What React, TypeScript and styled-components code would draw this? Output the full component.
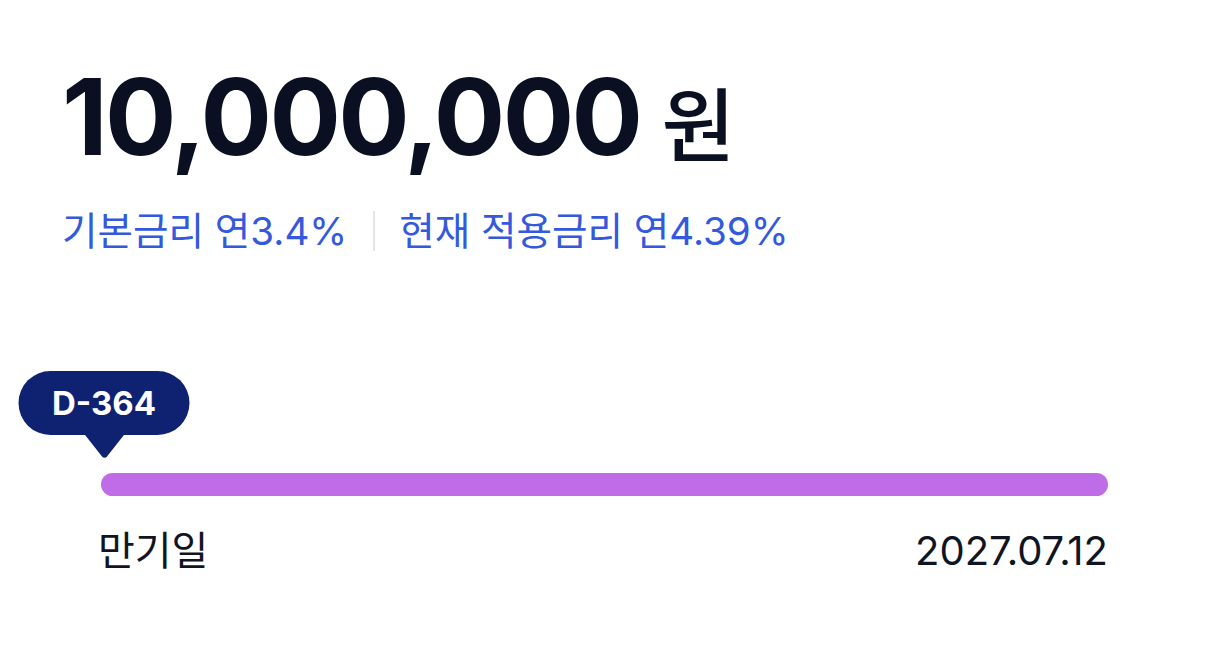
import styled, { createGlobalStyle } from 'styled-components';

const GlobalStyle = createGlobalStyle`
  html, body {
    margin: 0;
    padding: 0;
    background: #ffffff;
  }
  body {
    font-family: Inter, "Noto Sans CJK KR", sans-serif;
    -webkit-font-smoothing: antialiased;
  }
`;

const Page = styled.div`
  width: 1206px;
  height: 650px;
  box-sizing: border-box;
  padding: 59px 0 0 62px;
  display: flex;
  flex-direction: column;
`;

const AmountRow = styled.div`
  display: flex;
  align-items: baseline;
  gap: 21px;
  color: #0a1022;
`;

const Amount = styled.span`
  font-family: Inter, sans-serif;
  font-size: 106px;
  font-weight: 700;
  letter-spacing: -2.6px;
  line-height: 116px;
`;

const Unit = styled.span`
  font-family: "Noto Sans CJK KR", sans-serif;
  font-size: 80px;
  font-weight: 500;
`;

const RateRow = styled.div`
  display: flex;
  align-items: center;
  margin-top: 30px;
  color: #3459dd;
  font-size: 38.6px;
  line-height: 46px;
  font-family: Inter, "Noto Sans CJK KR", sans-serif;
  font-weight: 400;
`;

const Divider = styled.span`
  width: 2px;
  height: 40px;
  background: #e3e5ea;
  margin: 0 24px 0 26px;
`;

const Track = styled.div`
  position: relative;
  margin: 219px 0 0 39px;
  width: 1007px;
`;

const Bubble = styled.div`
  position: absolute;
  left: 3px;
  bottom: 100%;
  margin-bottom: 38px;
  transform: translateX(-50%);
  width: 171px;
  height: 64px;
  border-radius: 32px;
  background: #0f2271;
  color: #ffffff;
  font-family: Inter, sans-serif;
  font-size: 33px;
  font-weight: 700;
  display: flex;
  align-items: center;
  justify-content: center;
`;

const Pointer = styled.svg`
  position: absolute;
  left: 50%;
  top: 62px;
  transform: translateX(-50%);
`;

const Bar = styled.div`
  height: 23px;
  border-radius: 12px;
  background: #c06be7;
`;

const Labels = styled.div`
  display: flex;
  justify-content: space-between;
  margin-top: 32px;
  margin-left: -3px;
  color: #111522;
  font-family: Inter, "Noto Sans CJK KR", sans-serif;
  font-size: 40px;
  line-height: 46px;
`;

export default function App() {
  return (
    <>
      <GlobalStyle />
      <Page>
        <AmountRow>
          <Amount>10,000,000</Amount>
          <Unit>원</Unit>
        </AmountRow>
        <RateRow>
          <span>기본금리 연3.4%</span>
          <Divider />
          <span>현재 적용금리 연4.39%</span>
        </RateRow>
        <Track>
          <Bubble>
            D-364
            <Pointer width="42" height="26" viewBox="0 0 42 26">
              <path d="M0 0 H42 L23.5 23.5 Q21 26 18.5 23.5 Z" fill="#0f2271" />
            </Pointer>
          </Bubble>
          <Bar />
          <Labels>
            <span>만기일</span>
            <span>2027.07.12</span>
          </Labels>
        </Track>
      </Page>
    </>
  );
}
